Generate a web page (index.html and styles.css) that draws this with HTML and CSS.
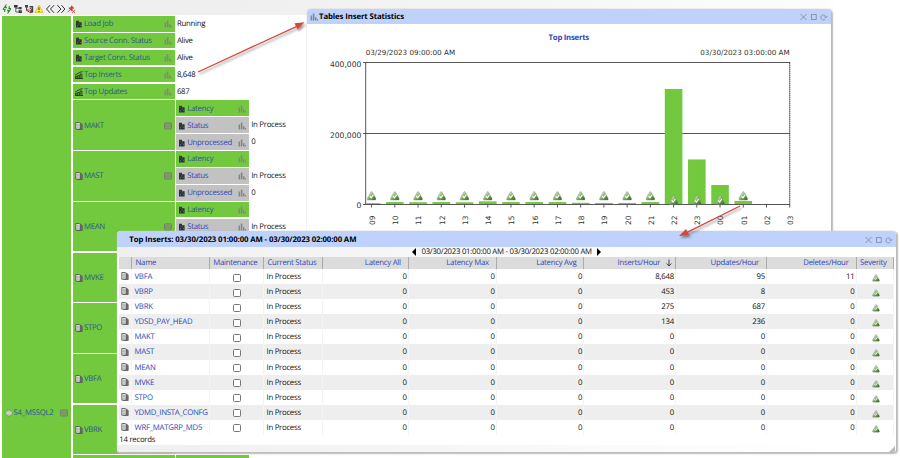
FILE: index.html
```html
<!DOCTYPE html>
<html lang="en">
<head>
    <meta charset="UTF-8">
    <meta name="viewport" content="width=device-width, initial-scale=1.0">
    <title>S4_MSSQL2</title>
    <link rel="stylesheet" href="styles.css">
</head>
<body>
    <!-- Shared icons -->
    <svg class="defs" width="0" height="0">
        <defs>
            <linearGradient id="okFill" x1="0" y1="0" x2="1" y2="1">
                <stop offset="0.2" stop-color="#d5e8cc"/>
                <stop offset="0.6" stop-color="#6ea352"/>
                <stop offset="1" stop-color="#2f5a1c"/>
            </linearGradient>
            <filter id="arrowShadow" x="-20%" y="-20%" width="140%" height="150%">
                <feDropShadow dx="1.5" dy="2" stdDeviation="1" flood-color="#000" flood-opacity="0.4"/>
            </filter>
        </defs>
        <symbol id="metric" viewBox="0 0 8 8">
            <path d="M1 0.7h3v1.6h2.6v5.2H1z" fill="#2c3230"/>
            <path d="M1.6 1.4h1v1h-1zM5 5h1v1H5z" fill="#a04848"/>
            <path d="M3.6 3.6h1v1h-1z" fill="#3b9a4c"/>
            <path d="M2 5h1v1.4H2z" fill="#4b63a8"/>
        </symbol>
        <symbol id="top" viewBox="0 0 8 8">
            <path d="M0.3 3.8 5.8 1l1.8-0.3M0.4 7.5V5.2h1.5v2.3M2.7 7.5v-3h1.6v3M5.1 7.5V3h1.8v4.5M0 7.5h8" fill="none" stroke="#20361a" stroke-width="0.9"/>
        </symbol>
        <symbol id="bars" viewBox="0 0 8 8">
            <path d="M0.6 2.5h1.5v4.9H0.6zM2.8 0.6h1.6v6.8H2.8zM5 4.2h1.5v3.2H5zM7 6h1v1.4H7z" fill="#858585"/>
        </symbol>
        <symbol id="doc" viewBox="0 0 8 8">
            <path d="M2.6 1.2h3.3l1.3 1.6v4.8H2.6z" fill="#777" stroke="#3a3a3a" stroke-width="0.6"/>
            <path d="M0.8 0.5h3.4l1 1v5.7H0.8z" fill="#e6e6e6" stroke="#3a3a3a" stroke-width="0.7"/>
            <path d="M1.7 2.3h2.4M1.7 3.7h2.6M1.7 5.2h2.6" stroke="#777" stroke-width="0.5"/>
        </symbol>
        <symbol id="grid" viewBox="0 0 8 8">
            <rect x="0.5" y="0.8" width="7" height="6.2" rx="1" fill="#7fa763" stroke="#757b70" stroke-width="0.9"/>
            <path d="M1.2 3h5.6M1.2 4.8h5.6" stroke="#757b70" stroke-width="0.6"/>
        </symbol>
        <symbol id="ok" viewBox="0 0 10 10">
            <path d="M5 0.6Q5.6 0.6 6 1.5L9.3 7.6Q9.8 9 8.6 9H1.4Q0.2 9 0.7 7.6L4 1.5Q4.4 0.6 5 0.6z" fill="url(#okFill)" stroke="#7c8c76" stroke-width="0.4"/>
            <path d="M3.2 5.2 4.6 6.8 6.8 3.8" fill="none" stroke="#fff" stroke-width="1.1"/>
        </symbol>
        <symbol id="controls" viewBox="0 0 30 8">
            <path d="M1.5 1l6 6M7.5 1l-6 6" fill="none" stroke="#7f879b" stroke-width="0.8"/>
            <rect x="12.4" y="1.6" width="4.8" height="4.8" fill="none" stroke="#7f879b" stroke-width="0.8"/>
            <path d="M26.8 3.8A2.5 2.5 0 1 0 26.3 6M28.4 3.2 26.8 5 25.2 3.4" fill="none" stroke="#7f879b" stroke-width="0.8"/>
        </symbol>
    </svg>

    <div class="toolbar">
        <svg viewBox="0 0 10 10"><path d="M1 5.5 3.8 1.5 3.6 3.8H5M1 5.5h2L2.6 8M9 4.5 6.2 8.6 6.4 6.2H5M9 4.5H7L7.4 2" fill="none" stroke="#238a27" stroke-width="1.1"/></svg>
        <svg viewBox="0 0 10 10"><path d="M1 1h3.6v2.4H1zM5.6 3h3v2.2h-3zM5.6 6.3h3.2v2.6H5.6z" fill="#333"/><path d="M2.8 3v5h3M2.8 4.3h3" fill="none" stroke="#444" stroke-width="0.8"/><path d="M6 3.5h1v1H6zM7 7h1v1H7z" fill="#d33"/></svg>
        <svg viewBox="0 0 10 10"><path d="M1 1h3v2.4H1zM5.4 2h3.8v6.6L6.4 9z" fill="#444"/><path d="M2.6 3v3h4" fill="none" stroke="#444"/><path d="M4.6 3.3h3v3h-3z" fill="#c9c9c9"/><path d="M2 6l5 3M6 4l2 2" stroke="#a42c2c" stroke-width="1"/></svg>
        <svg viewBox="0 0 10 10"><path d="M5 1.2 9 8.4H1z" fill="#fff04a" stroke="#d8b52e" stroke-width="0.8"/><path d="M5 3.3v2.8M5 6.9v0.9" stroke="#222" stroke-width="0.9"/></svg>
        <svg viewBox="0 0 10 10"><path d="M5 1.2 1.5 5 5 8.8M9 1.2 5.5 5 9 8.8" fill="none" stroke="#333" stroke-width="1"/></svg>
        <svg viewBox="0 0 10 10"><path d="M1.4 1.2 4.9 5 1.4 8.8M5.4 1.2 8.9 5 5.4 8.8" fill="none" stroke="#333" stroke-width="1"/></svg>
        <svg viewBox="0 0 10 10"><path d="M5.4 1.2 8.4 4.2 6.8 4.8 5.8 7.4 2.4 4 4.8 3z" fill="#c8453e"/><path d="M4 5.7 1.6 8.3" stroke="#777"/><path d="M6 6l3 3M9 6 6 9" stroke="#d84b44" stroke-width="0.9"/></svg>
    </div>

    <div class="tree">
        <div class="cell node source">
            <svg class="globe" viewBox="0 0 8 8"><circle cx="4" cy="4" r="3.1" fill="#a9bc9c" stroke="#718565" stroke-width="0.6"/><path d="M1 4h6M4 1v6M2 1.8v4.4M6 1.8v4.4" stroke="#eef3ea" stroke-width="0.5"/></svg>
            <span>S4_MSSQL2</span>
            <svg class="end"><use href="#grid"/></svg>
        </div>
        <div class="branches" id="branches"></div>
    </div>

    <div class="window chart-window">
        <div class="title-bar">
            <svg class="title-icon"><use href="#bars"/></svg>
            <span>Tables Insert Statistics</span>
            <svg class="controls"><use href="#controls"/></svg>
        </div>
        <div class="chart-title">Top Inserts</div>
        <svg class="chart" id="chart" width="523" height="188" viewBox="307 44 523 188">
            <text x="365.7" y="55.3">03/29/2023 09:00:00 AM</text>
            <text x="789.7" y="55.3" text-anchor="end">03/30/2023 03:00:00 AM</text>
            <text class="axis" x="361.3" y="66.6" text-anchor="end">400,000</text>
            <text class="axis" x="361.3" y="137.6" text-anchor="end">200,000</text>
            <text class="axis" x="361.3" y="208.2" text-anchor="end">0</text>
            <path class="line" d="M363 62.5H790M363 133.5H790M363 204.5H790M365.7 62.5V204.5"/>
            <path class="dotted" d="M789.7 62.5V204.5"/>
            <g id="plot"></g>
        </svg>
    </div>

    <div class="window list-window">
        <div class="title-bar">
            <span>Top Inserts: 03/30/2023 01:00:00 AM - 03/30/2023 02:00:00 AM</span>
            <svg class="controls"><use href="#controls"/></svg>
        </div>
        <div class="period">
            <svg viewBox="0 0 4 8"><path d="M4 0v8L0 4z"/></svg>
            <span>03/30/2023 01:00:00 AM - 03/30/2023 02:00:00 AM</span>
            <svg viewBox="0 0 4 8"><path d="M0 0v8l4-4z"/></svg>
        </div>
        <div class="list" id="list">
            <div class="row head">
                <span></span>
                <span>Name</span>
                <span>Maintenance</span>
                <span>Current Status</span>
                <span class="num">Latency All</span>
                <span class="num">Latency Max</span>
                <span class="num">Latency Avg</span>
                <span class="num sorted">Inserts/Hour <svg viewBox="0 0 6 8"><path d="M3 0.5v6.5M0.6 4.5 3 7l2.4-2.5" fill="none" stroke="#333" stroke-width="0.9"/></svg></span>
                <span class="num">Updates/Hour</span>
                <span class="num">Deletes/Hour</span>
                <span>Severity</span>
            </div>
        </div>
        <div class="records">14 records</div>
        <div class="status-bar">
            <svg viewBox="0 0 6 6"><path d="M6 0v6H0z" fill="#bbb"/></svg>
        </div>
    </div>

    <svg class="arrows" width="900" height="458" viewBox="0 0 900 458">
        <g filter="url(#arrowShadow)" stroke="#d8453e" fill="#d8453e">
            <path d="M198 72 299 25.3" stroke-width="1.3"/>
            <path d="M304.5 22.3 297.5 29.5 294.5 23.3z" stroke="none"/>
            <path d="M740 206 686 232.8" stroke-width="1.3"/>
            <path d="M679 236 686 228.9 689.2 235.3z" stroke="none"/>
        </g>
    </svg>

    <script>
        const metrics = [
            ['metric', 'Load Job', 'Running'],
            ['metric', 'Source Conn. Status', 'Alive'],
            ['metric', 'Target Conn. Status', 'Alive'],
            ['top', 'Top Inserts', '8,648'],
            ['top', 'Top Updates', '687']
        ];
        const tables = ['MAKT', 'MAST', 'MEAN', 'MVKE', 'STPO', 'VBFA', 'VBRK'];

        // name, inserts, updates, deletes
        const rows = [
            ['VBFA', '8,648', '95', '11'],
            ['VBRP', '453', '8', '0'],
            ['VBRK', '275', '687', '0'],
            ['YDSD_PAY_HEAD', '134', '236', '0'],
            ['MAKT', '0', '0', '0'],
            ['MAST', '0', '0', '0'],
            ['MEAN', '0', '0', '0'],
            ['MVKE', '0', '0', '0'],
            ['STPO', '0', '0', '0'],
            ['YDMD_INSTA_CONFG', '0', '0', '0'],
            ['WRF_MATGRP_MD5', '0', '0', '0']
        ];

        // inserts for each hour, starting at 09
        const inserts = [2500, 5500, 5000, 5500, 5000, 7500, 5500, 5500, 5500, 3500, 3000, 3000, 5500,
            324000, 125500, 53500, 8648, 0, 0];

        function icon(name, cls) {
            return `<svg class="${cls || 'icon'}"><use href="#${name}"/></svg>`;
        }

        function cell(type, label, end, cls) {
            return `<div class="cell ${cls}">${icon(type)}<span>${label}</span>${icon(end, 'end')}</div>`;
        }

        // Tree on the left
        let tree = '';
        metrics.forEach(([type, label, value]) => {
            tree += `<div class="branch">${cell(type, label, 'bars', 'node')}<div class="value">${value}</div></div>`;
        });
        tables.forEach((name, i) => {
            // groups from the fourth on have their leaves under the list window
            const leaves = i > 2 ? '' : `<div class="leaves">
                <div class="leaf">${cell('metric', 'Latency', 'bars', 'small')}</div>
                <div class="leaf">${cell('metric', 'Status', 'bars', 'small grey')}<div class="value">In Process</div></div>
                ${i < 2 ? `<div class="leaf">${cell('metric', 'Unprocessed', 'bars', 'small grey')}<div class="value">0</div></div>` : ''}
            </div>`;
            tree += `<div class="branch group">${cell('doc', name, 'grid', 'node')}${leaves}</div>`;
        });
        tree += '<div class="branch"><div class="cell node"></div><div class="cell small"></div></div>';
        document.getElementById('branches').innerHTML = tree;

        // Rows of the list window
        let list = '';
        rows.forEach(([name, ins, upd, del]) => {
            list += `<div class="row"><span>${icon('doc')}</span><a>${name}</a><span class="check"><i></i></span>
                <span>In Process</span><span class="num">0</span><span class="num">0</span><span class="num">0</span>
                <span class="num">${ins}</span><span class="num">${upd}</span><span class="num">${del}</span>
                <span class="severity">${icon('ok')}</span></div>`;
        });
        document.getElementById('list').innerHTML += list;

        // Chart bars, ticks and hour labels
        let plot = '';
        inserts.forEach((value, i) => {
            const x = 371.6 + i * 23.23;
            const h = value / 400000 * 142;
            const left = Math.max(x - 8.8, 366.2);
            if (value) {
                plot += `<rect class="bar" x="${left}" y="${204 - h}" width="${x + 8.8 - left}" height="${h}"/>`;
                plot += `<use href="#ok" x="${x - 5}" y="${value > 50000 ? 195.2 : 191}" width="10" height="10"/>`;
            }
            plot += `<path class="line" d="M${x} 204.5v3"/>`;
            plot += `<text class="hour" transform="translate(${x + 3.4} 225) rotate(-90)">${String((i + 9) % 24).padStart(2, '0')}</text>`;
        });
        document.getElementById('plot').innerHTML = plot;
    </script>
</body>
</html>
```

FILE: styles.css
```css
* {
    box-sizing: border-box;
}
body {
    margin: 0;
    height: 458px;
    overflow: hidden;
    background: #fff;
    font-family: "Open Sans", "Noto Sans", sans-serif;
    font-size: 7.8px;
    letter-spacing: -0.27px;
    text-rendering: geometricPrecision;
    color: #111;
    white-space: nowrap;
}
.defs {
    position: absolute;
}
.toolbar {
    display: flex;
    align-items: center;
    gap: 0.7px;
    height: 15px;
    padding: 3px 0 0 2.3px;
    background: linear-gradient(to right, #efefef 25%, #fdfdfd 92%, #fff 93%);
}
.toolbar svg {
    width: 10px;
    height: 10px;
}

/* tree */
.tree {
    display: flex;
    align-items: flex-start;
    gap: 1.3px;
    height: 442px;
    margin: 1px 0 0 2.3px;
    overflow: hidden;
}
.cell {
    display: flex;
    align-items: center;
    flex: none;
    gap: 0.8px;
    padding: 1px 3px 0 2.5px;
    background: #72c93e;
    color: #2d5597;
}
.cell.source {
    width: 69px;
    height: 793px;
}
.cell svg, .row svg {
    width: 8px;
    height: 8px;
    flex: none;
}
.cell .end {
    margin-left: auto;
}
.branches {
    display: flex;
    flex-direction: column;
    gap: 1.3px;
}
.branch, .leaf {
    display: flex;
    gap: 1.3px;
}
.branch.group {
    height: 49.4px;
}
.branch .node {
    width: 102px;
    min-height: 15.6px;
}
.leaves {
    display: flex;
    flex-direction: column;
    gap: 1.3px;
}
.cell.small {
    width: 73px;
    height: 15.6px;
}
.cell.grey {
    background: #c2c2c2;
    color: #3048b8;
}
.value {
    line-height: 17.4px;
    height: 15.6px;
    padding-left: 1px;
}

/* windows */
.window {
    position: absolute;
    border-radius: 4px 4px 3px 3px;
    background: #fff;
    box-shadow: 1px 1px 1.5px 1px #bbb;
    overflow: hidden;
}
.chart-window {
    left: 307px;
    top: 9px;
    width: 523.5px;
    height: 240px;
}
.list-window {
    left: 117.3px;
    top: 231.3px;
    width: 778.7px;
    height: 221px;
}
.title-bar {
    display: flex;
    align-items: center;
    height: 15.4px;
    padding: 1.2px 2px 0 3px;
    background: #bfd2fb;
    color: #000;
    font-size: 7.8px;
    letter-spacing: -0.12px;
    font-weight: bold;
}
.list-window .title-bar {
    padding-left: 12px;
}
.title-icon {
    width: 8px;
    height: 8px;
    margin-right: 1px;
}
.controls {
    width: 30px;
    height: 8px;
    margin-left: auto;
}
.chart-title {
    height: 19.6px;
    padding-top: 8.5px;
    text-align: center;
    font-weight: bold;
    color: #2f45b0;
}
.chart {
    display: block;
    font-family: "DejaVu Sans", sans-serif;
    font-size: 7.2px;
    letter-spacing: 0;
    fill: #333;
}
.chart .axis {
    font-size: 7.6px;
}
.chart .hour {
    font-size: 7.4px;
}
.chart .line {
    fill: none;
    stroke: #444;
    stroke-width: 0.9;
}
.chart .dotted {
    stroke: #222;
    stroke-width: 1.1;
    stroke-dasharray: 1.3 0.7;
}
.chart .bar {
    fill: #72c93e;
}

/* list */
.period {
    display: flex;
    align-items: center;
    justify-content: center;
    gap: 5px;
    height: 10.3px;
    padding-top: 0.7px;
    background: linear-gradient(to right, #efefef, #fff 75%);
}
.period svg {
    width: 4px;
    height: 8px;
}
.list {
    padding: 0 2.3px 0 1.3px;
}
.row {
    display: grid;
    grid-template-columns: 13.4px 77.7px 54.3px 59.5px 85.3px 88px 87.6px 91.7px 91px 89.5px 1fr;
    height: 15.1px;
    line-height: 17px;
}
.row > * {
    height: 15.1px;
    border-right: 1px solid #f4f4f4;
    padding: 0 2.5px;
}
.row:nth-child(odd) {
    background: #eee;
}
.row a {
    color: #3048b8;
}
.row .num {
    text-align: right;
    padding-right: 1.2px;
}
.row.head {
    height: 12px;
    line-height: 13.8px;
    background: #dcdcdc;
    color: #3048b8;
}
.row.head > * {
    height: 12px;
    border-right: 1px solid #aaa;
    padding-left: 3.5px;
}
.row.head .num {
    padding-right: 7px;
}
.row.head .sorted {
    padding-right: 3px;
}
.sorted svg {
    width: 6px;
    height: 8px;
    margin-left: 4px;
    vertical-align: -2px;
}
.row .icon {
    display: block;
    margin-top: 3.2px;
}
.row .check {
    display: flex;
    align-items: center;
    justify-content: center;
    padding-left: 4px;
}
.check i {
    width: 8px;
    height: 8px;
    margin-top: 2px;
    border: 1px solid #777;
    border-radius: 1.5px;
    background: #fff;
}
.row .severity {
    display: flex;
    justify-content: center;
    padding-left: 5px;
}
.row .severity .icon {
    margin-top: 5px;
}
.records {
    padding-left: 2px;
    height: 10.3px;
    line-height: 11.8px;
}
.status-bar {
    display: flex;
    justify-content: flex-end;
    align-items: center;
    height: 8px;
    padding-right: 1px;
    background: linear-gradient(to right, #efefef, #fff 92%);
}
.status-bar svg {
    width: 6px;
    height: 6px;
}
.arrows {
    position: absolute;
    left: 0;
    top: 0;
}
```
